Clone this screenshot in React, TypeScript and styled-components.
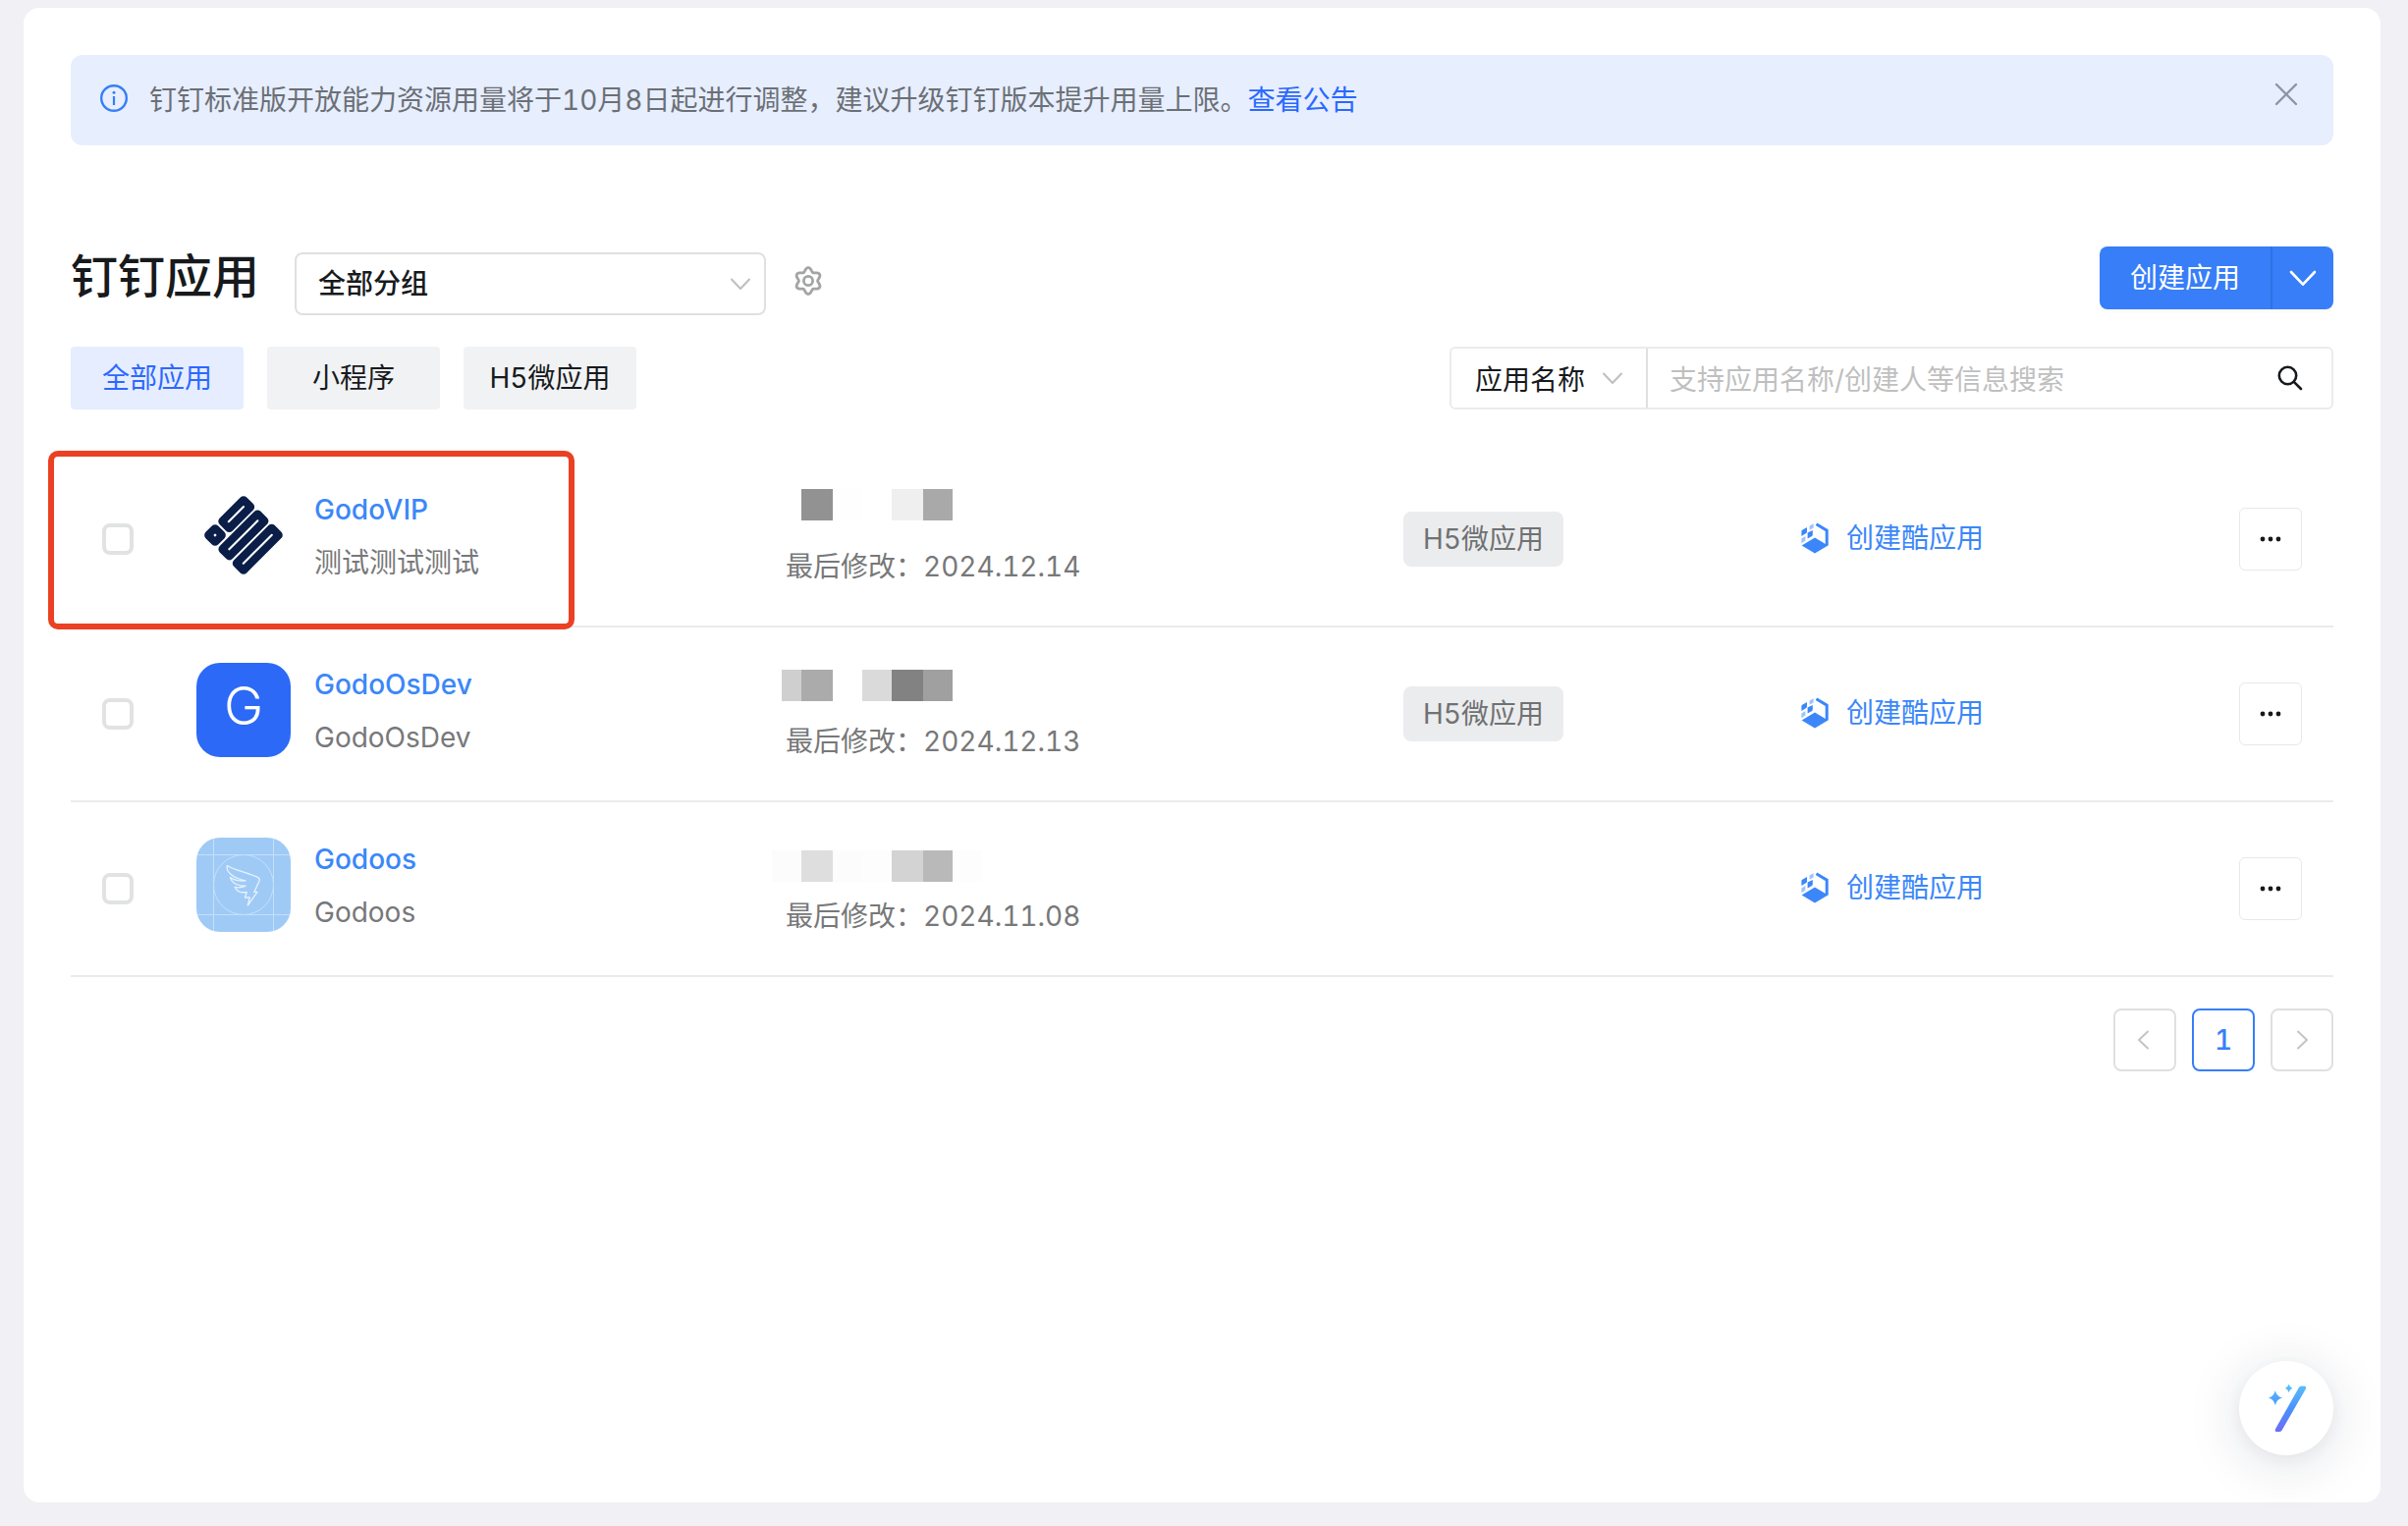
import React from "react";
import styled, { createGlobalStyle } from "styled-components";

const GlobalStyle = createGlobalStyle`
  *, *::before, *::after { box-sizing: border-box; }
  body {
    margin: 0;
    background: #f0f0f5;
    color: #171a1d;
    font-family: Inter, "Noto Sans CJK SC", sans-serif;
    font-size: 28px;
    line-height: 40px;
    font-variant-numeric: tabular-nums;
    -webkit-font-smoothing: antialiased;
  }
  button, input, select { font: inherit; color: inherit; margin: 0; }
  button { cursor: pointer; padding: 0; border: 0; background: none; }
  a { text-decoration: none; }
  svg { display: block; flex: none; }
`;

const Page = styled.div`
  display: flex;
  min-height: 100vh;
  padding: 8px 28px 24px 24px;
`;

const Card = styled.main`
  flex: 1;
  min-width: 0;
  padding: 48px;
  border-radius: 16px;
  background: #fff;
`;

const Banner = styled.div`
  display: flex;
  align-items: flex-start;
  gap: 22px;
  padding: 26px 36px 26px 30px;
  border-radius: 12px;
  background: #e7eefe;
  color: #6b7076;

  > svg { margin-top: 4px; }
`;

const BannerText = styled.p`
  flex: 1;
  margin: 0;

  a { color: #2a68ff; }
`;

const CloseButton = styled.button`
  padding: 2px 0;
`;

const Header = styled.header`
  display: flex;
  align-items: flex-start;
  justify-content: space-between;
  margin-top: 103px;
`;

const HeaderMain = styled.div`
  display: flex;
  align-items: baseline;
  padding-top: 1px;
`;

const Title = styled.h1`
  margin: 0 36px 0 0;
  font-size: 48px;
  line-height: 60px;
  font-weight: 500;
`;

const SelectWrap = styled.label<{ $width: number; $inset: number }>`
  position: relative;
  width: ${(p) => p.$width}px;

  svg {
    position: absolute;
    top: 50%;
    right: ${(p) => p.$inset}px;
    transform: translateY(-50%);
    pointer-events: none;
  }
`;

const GroupSelect = styled.select`
  appearance: none;
  width: 100%;
  height: 64px;
  padding: 0 48px 0 22px;
  border: 2px solid #e0e0e0;
  border-radius: 8px;
  background: #fff;
  font-weight: 500;
`;

const GearButton = styled.button`
  margin-left: 28px;
`;

const SplitButton = styled.div`
  display: flex;
  height: 64px;
  border-radius: 8px;
  background: #377ef8;
  color: #fff;
  box-shadow: 0 4px 0 rgba(0, 0, 0, 0.01);
`;

const CreateButton = styled.button`
  padding: 0 31px;
`;

const CreateMenuButton = styled.button`
  display: grid;
  place-items: center;
  width: 64px;
  border-left: 2px solid #2f72e6;
`;

const Toolbar = styled.div`
  display: flex;
  justify-content: space-between;
  margin-top: 32px;
`;

const Tabs = styled.div`
  display: flex;
  gap: 24px;
`;

const Tab = styled.button<{ $active?: boolean }>`
  width: 176px;
  height: 64px;
  border-radius: 4px;
  background: ${(p) => (p.$active ? "#e5edff" : "#f1f2f4")};
  color: ${(p) => (p.$active ? "#2c68ff" : "#171a1d")};
`;

const Search = styled.form`
  display: flex;
  width: 900px;
  height: 64px;
  border: 2px solid #ebebeb;
  border-radius: 6px;
`;

const FieldSelect = styled.select`
  appearance: none;
  width: 100%;
  height: 60px;
  padding: 4px 48px 0 24px;
  border: 0;
  border-right: 2px solid #e0e0e0;
  background: transparent;
`;

const SearchInput = styled.input`
  flex: 1;
  min-width: 0;
  padding: 4px 22px 0;
  border: 0;
  outline: 0;
  background: transparent;

  &::placeholder { color: #bfbfbf; opacity: 1; }
`;

const SearchButton = styled.button`
  padding: 0 29px;
`;

const AppTable = styled.table`
  display: block;
  margin-top: 44px;
`;

const TableBody = styled.tbody`
  display: block;
`;

const Row = styled.tr`
  position: relative;
  display: grid;
  grid-template-columns: 128px 600fr 629fr 405fr 446fr 96px;
  border-bottom: 2px solid #ebebeb;
`;

const Cell = styled.td<{ $top: number }>`
  position: relative;
  height: 176px;
  padding: ${(p) => p.$top}px 0 0;
`;

const Checkbox = styled.input`
  display: block;
  appearance: none;
  width: 32px;
  height: 32px;
  margin: 0 0 0 32px;
  border: 4px solid #e1e2e4;
  border-radius: 8px;
`;

const AppInfo = styled.div`
  display: flex;
  gap: 24px;
`;

const AppText = styled.div`
  padding-top: 2px;
`;

const Avatar = styled.div<{ $bg: string }>`
  display: grid;
  place-items: center;
  width: 96px;
  height: 96px;
  border-radius: 24px;
  overflow: hidden;
  background: ${(p) => p.$bg};
`;

const AvatarLetter = styled.span`
  padding-bottom: 8px;
  color: #fff;
  font-size: 54px;
  font-weight: 300;
  line-height: 60px;
`;

const AppName = styled.a`
  display: block;
  color: #3b87f9;
  font-weight: 500;
`;

const AppDesc = styled.div`
  margin-top: 14px;
  color: #77787a;
`;

const Modified = styled.div`
  color: #777879;
`;

const Redacted = styled.svg`
  position: absolute;
  top: 37px;
  left: -14px;
`;

const Tag = styled.span`
  display: inline-block;
  padding: 8px 20px;
  border-radius: 8px;
  background: #ebecee;
  color: #6f7173;
`;

const CoolLink = styled.a`
  display: flex;
  align-items: center;
  gap: 18px;
  color: #3b87f9;
`;

const MoreButton = styled.button`
  display: grid;
  place-items: center;
  width: 64px;
  height: 64px;
  border: 1px solid #e8e8e8;
  border-radius: 6px;
`;

const Highlight = styled.div`
  position: absolute;
  top: -2px;
  left: -23px;
  width: 536px;
  height: 182px;
  border: 6px solid #eb4024;
  border-radius: 10px;
  pointer-events: none;
`;

const Pagination = styled.nav`
  display: flex;
  justify-content: flex-end;
  gap: 16px;
  margin-top: 32px;
`;

const PageButton = styled.button<{ $current?: boolean }>`
  display: grid;
  place-items: center;
  width: 64px;
  height: 64px;
  border: 2px solid ${(p) => (p.$current ? "#377ef8" : "#e0e0e0")};
  border-radius: 8px;
  color: #377ef8;
  font-weight: 500;
`;

const AssistantButton = styled.button`
  position: fixed;
  right: 76px;
  bottom: 72px;
  width: 96px;
  height: 96px;
  border-radius: 50%;
  background: #fff;
  box-shadow: 0 8px 56px rgba(24, 32, 64, 0.14), 0 4px 20px rgba(24, 32, 64, 0.05);
`;

type ChevronProps = { size: number; color: string; width?: number };

const ChevronDown = ({ size, color, width = 2 }: ChevronProps) => (
  <svg width={size} height={size} viewBox="0 0 24 24" fill="none" stroke={color} strokeWidth={width} strokeLinecap="round" strokeLinejoin="round">
    <path d="M3 7.5 12 17 21 7.5" />
  </svg>
);

const ChevronSide = ({ flip }: { flip?: boolean }) => (
  <svg width="24" height="24" viewBox="0 0 24 24" fill="none" stroke="#c4c4c4" strokeWidth="2" strokeLinecap="round" strokeLinejoin="round">
    <path d={flip ? "M8 3.5 17 12 8 20.5" : "M15 3.5 6 12 15 20.5"} />
  </svg>
);

const InfoIcon = () => (
  <svg width="28" height="28" viewBox="0 0 28 28" fill="none" stroke="#377ef8">
    <circle cx="14" cy="14" r="12.8" strokeWidth="2.4" />
    <path d="M14 12v9" strokeWidth="2.2" />
    <circle cx="14" cy="8.3" r="1.5" fill="#377ef8" stroke="none" />
  </svg>
);

const CloseIcon = () => (
  <svg width="24" height="24" viewBox="0 0 24 24" fill="none" stroke="#8f959f" strokeWidth="2.4" strokeLinecap="round">
    <path d="M2 2 22 22M22 2 2 22" />
  </svg>
);

const gearPath =
  Array.from({ length: 120 }, (_, i) => {
    const angle = (i / 120) * Math.PI * 2;
    const radius = 11.5 + 1.9 * Math.cos(6 * angle);
    const x = 15 + radius * Math.sin(angle);
    const y = 15 - radius * Math.cos(angle);
    return `${i ? "L" : "M"}${x.toFixed(2)} ${y.toFixed(2)}`;
  }).join("") + "Z";

const GearIcon = () => (
  <svg width="30" height="28" viewBox="0 0 30 28" overflow="visible" fill="none" stroke="#a3a4a5" strokeWidth="2.8" strokeLinejoin="round">
    <path d={gearPath} />
    <circle cx="15" cy="15" r="4.6" />
  </svg>
);

const SearchIcon = () => (
  <svg width="26" height="26" viewBox="0 0 26 26" fill="none" stroke="#171a1d" strokeWidth="2.6" strokeLinecap="round">
    <circle cx="10.5" cy="10.5" r="8.7" />
    <path d="M16.8 16.8 24 24" />
  </svg>
);

const WeaveLogo = () => (
  <svg width="96" height="96" viewBox="0 0 96 96">
    <g transform="translate(48 48) rotate(-45)">
      <g fill="#0b1e48">
        <rect x="-29.5" y="-29.5" width="18" height="18" rx="4.5" />
        <rect x="-9.5" y="-29.5" width="39" height="18.4" rx="4.5" />
        <rect x="-29.5" y="-9.3" width="59" height="18.4" rx="4.5" />
        <rect x="-29.5" y="11" width="59" height="18.4" rx="4.5" />
      </g>
      <path d="M-1 -20.5H20.5M-20.5 -.2H20.5M-20.5 20.2H20.5" stroke="#fff" strokeWidth="2.1" strokeLinecap="round" />
      <circle cx="-20.5" cy="-20.5" r="1.4" fill="#fff" />
    </g>
  </svg>
);

const WingLogo = () => (
  <svg width="96" height="96" viewBox="0 0 96 96" fill="none" stroke="#c3e0f8" strokeWidth="1">
    <path d="M17.5 0V96M78.5 0V96M0 17.5H96M0 78.5H96" />
    <circle cx="48" cy="48" r="30.5" />
    <path
      stroke="#e4f3fd"
      strokeWidth="1.3"
      strokeLinejoin="round"
      d="M32 28.7C37 32.5 53 36 62.5 40.3Q65 41.6 64 44.2L58.8 55.4H62L52.3 69L54.3 61H49.4L51.3 55.6C45 56.3 40.6 54 39.2 50.4C43 51.2 47 50.6 50.2 49.2C43 49.6 36.2 46.5 34.4 40.6C39 43.4 45 44.4 50 43.9C40 41.4 31 36.6 31 29.4Q31.2 28.2 32 28.7Z"
    />
  </svg>
);

const CubeIcon = () => (
  <svg width="28" height="32" viewBox="0 0 28 32" fill="#3b87f9">
    <path d="M.6 23.4 14 15.6 27.4 23.4 14 31.4Z" />
    <path d="M15.5 1.8 26.2 8.2V23.4" fill="none" stroke="#3b87f9" strokeWidth="3" />
    <path d="M.4 9.2Q.4 8.2 1.2 7.8L6 5V9.6Q6 10.6 5.2 11L.4 14Z" />
    <path d="M6.6 10.4 11.8 8V12.6Q11.8 13.6 11 14L6.6 16.6V13Z" />
    <path d="M8.6 3.6 12.6 1.2V5.4L8.6 7.8Z" opacity=".5" />
    <path d="M.4 16.4 4.4 14V18.6L.4 21.2Z" opacity=".5" />
  </svg>
);

const MoreIcon = () => (
  <svg width="24" height="8" viewBox="0 0 24 8" fill="#171a1d">
    <circle cx="4" cy="4" r="2.4" />
    <circle cx="12" cy="4" r="2.4" />
    <circle cx="20" cy="4" r="2.4" />
  </svg>
);

const WandIcon = () => (
  <svg width="96" height="96" viewBox="0 0 96 96">
    <defs>
      <linearGradient id="wand" gradientUnits="userSpaceOnUse" x1="0" y1="24" x2="0" y2="72">
        <stop offset="0" stopColor="#58c0fb" />
        <stop offset="0.55" stopColor="#4a8efb" />
        <stop offset="1" stopColor="#6d6cf8" />
      </linearGradient>
    </defs>
    <g fill="url(#wand)">
      <path d="M63.2 25.6H66.4Q69 26 67.8 28.6L43.6 70.4Q42.6 72 40.8 72H38Q36 71.4 37 69.2L60.6 27.6Q61.6 25.8 63.2 25.6Z" />
      <path d="M36.8 30Q38.2 36 44 37.4Q38.2 38.8 36.8 45Q35.4 38.8 30 37.4Q35.4 36 36.8 30Z" />
      <path d="M50.6 23.6Q51.6 27 54.4 27.8Q51.6 28.6 50.6 32Q49.6 28.6 47 27.8Q49.6 27 50.6 23.6Z" />
    </g>
  </svg>
);

type Block = [x: number, width: number, color: string];

type AppEntry = {
  name: string;
  desc: string;
  date: string;
  tag?: string;
  avatarBg: string;
  avatar: React.ReactNode;
  blocksTop: number;
  blocks: Block[];
  highlighted?: boolean;
};

const apps: AppEntry[] = [
  {
    name: "GodoVIP",
    desc: "测试测试测试",
    date: "2024.12.14",
    tag: "H5微应用",
    avatarBg: "#fff",
    avatar: <WeaveLogo />,
    blocksTop: 0,
    blocks: [
      [30, 32, "#929292"],
      [62, 30, "#fefefe"],
      [122, 32, "#efefef"],
      [154, 30, "#a9a9a9"],
    ],
    highlighted: true,
  },
  {
    name: "GodoOsDev",
    desc: "GodoOsDev",
    date: "2024.12.13",
    tag: "H5微应用",
    avatarBg: "#2d69f7",
    avatar: <AvatarLetter>G</AvatarLetter>,
    blocksTop: 6,
    blocks: [
      [10, 20, "#cfcfcf"],
      [30, 32, "#ababab"],
      [92, 30, "#dadada"],
      [122, 32, "#828282"],
      [154, 30, "#a0a0a0"],
    ],
  },
  {
    name: "Godoos",
    desc: "Godoos",
    date: "2024.11.08",
    avatarBg: "#a0caf6",
    avatar: <WingLogo />,
    blocksTop: 12,
    blocks: [
      [0, 30, "#fcfcfc"],
      [30, 32, "#dedede"],
      [62, 30, "#fcfcfc"],
      [92, 30, "#fdfdfd"],
      [122, 32, "#d3d3d3"],
      [154, 30, "#b9b9b9"],
      [184, 30, "#fdfdfd"],
    ],
  },
];

const AppRow = ({ app }: { app: AppEntry }) => (
  <Row>
    <Cell $top={72}>
      <Checkbox type="checkbox" aria-label={app.name} />
      {app.highlighted && <Highlight />}
    </Cell>
    <Cell $top={36}>
      <AppInfo>
        <Avatar $bg={app.avatarBg}>{app.avatar}</Avatar>
        <AppText>
          <AppName href="#">{app.name}</AppName>
          <AppDesc>{app.desc}</AppDesc>
        </AppText>
      </AppInfo>
    </Cell>
    <Cell $top={96}>
      <Redacted width="214" height="44" viewBox="0 0 214 44" shapeRendering="crispEdges">
        {app.blocks.map(([x, width, color]) => (
          <rect key={x} x={x} y={app.blocksTop} width={width} height="32" fill={color} />
        ))}
      </Redacted>
      <Modified>最后修改：{app.date}</Modified>
    </Cell>
    <Cell $top={60}>{app.tag && <Tag>{app.tag}</Tag>}</Cell>
    <Cell $top={67}>
      <CoolLink href="#">
        <CubeIcon />
        创建酷应用
      </CoolLink>
    </Cell>
    <Cell $top={56}>
      <MoreButton type="button" aria-label="更多">
        <MoreIcon />
      </MoreButton>
    </Cell>
  </Row>
);

export default function App() {
  return (
    <>
      <GlobalStyle />
      <Page>
        <Card>
          <Banner>
            <InfoIcon />
            <BannerText>
              钉钉标准版开放能力资源用量将于10月8日起进行调整，建议升级钉钉版本提升用量上限。<a href="#">查看公告</a>
            </BannerText>
            <CloseButton type="button" aria-label="关闭">
              <CloseIcon />
            </CloseButton>
          </Banner>

          <Header>
            <HeaderMain>
              <Title>钉钉应用</Title>
              <SelectWrap $width={480} $inset={14}>
                <GroupSelect aria-label="分组">
                  <option>全部分组</option>
                </GroupSelect>
                <ChevronDown size={24} color="#bfbfbf" />
              </SelectWrap>
              <GearButton type="button" aria-label="设置">
                <GearIcon />
              </GearButton>
            </HeaderMain>
            <SplitButton>
              <CreateButton type="button">创建应用</CreateButton>
              <CreateMenuButton type="button" aria-label="更多创建方式">
                <ChevronDown size={32} color="#fff" />
              </CreateMenuButton>
            </SplitButton>
          </Header>

          <Toolbar>
            <Tabs>
              <Tab type="button" $active>全部应用</Tab>
              <Tab type="button">小程序</Tab>
              <Tab type="button">H5微应用</Tab>
            </Tabs>
            <Search onSubmit={(e) => e.preventDefault()}>
              <SelectWrap $width={200} $inset={24}>
                <FieldSelect aria-label="搜索字段">
                  <option>应用名称</option>
                </FieldSelect>
                <ChevronDown size={24} color="#bfbfbf" />
              </SelectWrap>
              <SearchInput aria-label="搜索" placeholder="支持应用名称/创建人等信息搜索" />
              <SearchButton type="submit" aria-label="搜索">
                <SearchIcon />
              </SearchButton>
            </Search>
          </Toolbar>

          <AppTable>
            <TableBody>
              {apps.map((app) => (
                <AppRow key={app.name} app={app} />
              ))}
            </TableBody>
          </AppTable>

          <Pagination aria-label="分页">
            <PageButton type="button" aria-label="上一页">
              <ChevronSide />
            </PageButton>
            <PageButton type="button" $current aria-current="page">1</PageButton>
            <PageButton type="button" aria-label="下一页">
              <ChevronSide flip />
            </PageButton>
          </Pagination>
        </Card>
      </Page>
      <AssistantButton type="button" aria-label="智能助手">
        <WandIcon />
      </AssistantButton>
    </>
  );
}
